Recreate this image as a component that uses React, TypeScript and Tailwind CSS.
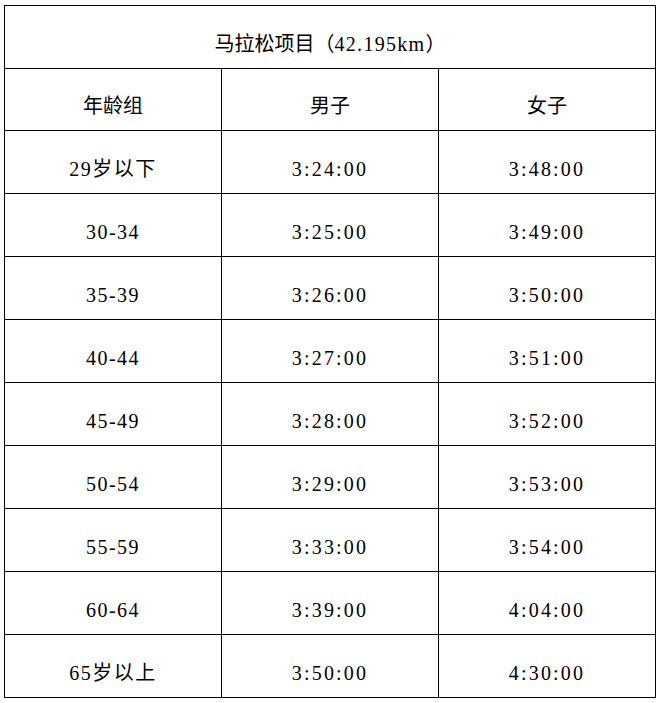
import React from "react";

const rows: [string, string, string][] = [
  ["29岁以下", "3:24:00", "3:48:00"],
  ["30-34", "3:25:00", "3:49:00"],
  ["35-39", "3:26:00", "3:50:00"],
  ["40-44", "3:27:00", "3:51:00"],
  ["45-49", "3:28:00", "3:52:00"],
  ["50-54", "3:29:00", "3:53:00"],
  ["55-59", "3:33:00", "3:54:00"],
  ["60-64", "3:39:00", "4:04:00"],
  ["65岁以上", "3:50:00", "4:30:00"],
];

const font = {
  fontFamily: '"Liberation Serif", "Noto Sans CJK SC", serif',
};

function Cell({ children, h, extra = "" }: { children: React.ReactNode; h: string; extra?: string }) {
  return (
    <div
      className={`flex items-center justify-center border-r border-b border-black pt-[13px] text-[20px] leading-none text-black ${h} ${extra}`}
    >
      {children}
    </div>
  );
}

export default function App() {
  return (
    <div className="min-h-[703px] w-[660px] bg-white" style={font}>
      <div className="ml-[4px] pt-[5px]">
        <div className="grid w-[652px] grid-cols-[217px_217px_217px] border-l border-t border-black">
          <div className="col-span-3 flex h-[63px] items-center justify-center border-r border-b border-black pt-[13px] text-[20px] leading-none text-black">
            <span>马拉松项目（</span>
            <span className="tracking-[1.3px]">42.195km</span>
            <span>）</span>
          </div>
          <Cell h="h-[62px]">年龄组</Cell>
          <Cell h="h-[62px]">男子</Cell>
          <Cell h="h-[62px]">女子</Cell>
          {rows.map(([a, b, c]) => (
            <React.Fragment key={a}>
              <Cell h="h-[63px]" extra="tracking-[1.5px]">{a}</Cell>
              <Cell h="h-[63px]" extra="tracking-[2.2px]">{b}</Cell>
              <Cell h="h-[63px]" extra="tracking-[2.2px]">{c}</Cell>
            </React.Fragment>
          ))}
        </div>
      </div>
    </div>
  );
}
